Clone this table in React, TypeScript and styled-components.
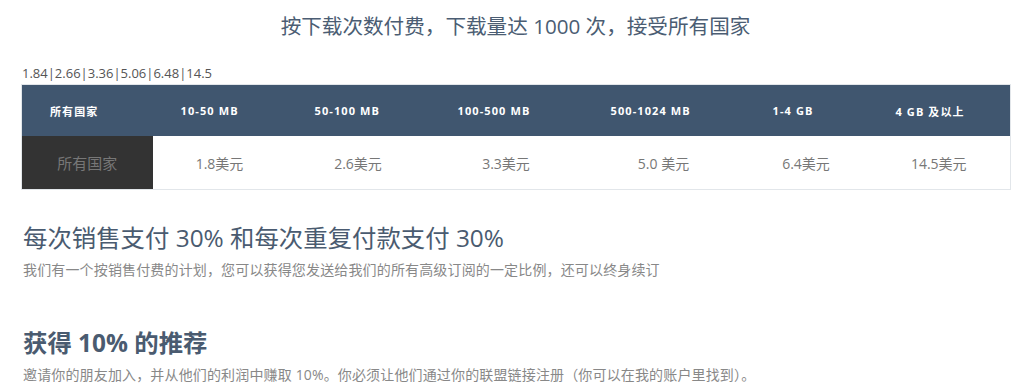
import React from 'react';
import styled, { createGlobalStyle } from 'styled-components';

const GlobalStyle = createGlobalStyle`
    html, body {
        margin: 0;
        padding: 0;
        background: #fff;
    }
    body {
        font-family: 'Open Sans', 'Noto Sans CJK SC', sans-serif;
    }
`;

const Page = styled.div`
    width: 989px;
    padding: 14px 0 0 21px;
    display: flex;
    flex-direction: column;
`;

const Title = styled.h1`
    margin: 0;
    font-size: 20.6px;
    line-height: 24px;
    font-weight: 400;
    color: #4b5d73;
    text-align: center;
`;

const PriceLine = styled.div`
    margin-top: 27px;
    font-size: 13px;
    line-height: 16px;
    color: #555;
    padding-left: 1px;
`;

const PriceTable = styled.table`
    margin-top: 3px;
    width: 989px;
    table-layout: fixed;
    border-collapse: collapse;
    border: 1px solid #e2e6ea;

    th {
        height: 51px;
        padding: 0 0 0 28px;
        background: #40566f;
        color: #fff;
        font-size: 11px;
        font-weight: 700;
        letter-spacing: 1.1px;
        text-align: left;
    }

    td {
        height: 53px;
        padding: 0;
        text-align: center;
        font-size: 14px;
        color: #777;
    }
`;

const CountryCell = styled.td`
    && {
        background: #333;
        color: #777;
        font-size: 15px;
    }
`;

const SectionTitle = styled.h2<{ $bold?: boolean; $gap: number }>`
    margin: ${(p) => p.$gap}px 0 0 2px;
    font-size: 24.4px;
    line-height: 30px;
    font-weight: ${(p) => (p.$bold ? 700 : 400)};
    color: #4a5b70;
`;

const SectionText = styled.p`
    margin: 7px 0 0 2px;
    font-size: 14px;
    line-height: 20px;
    letter-spacing: 0.15px;
    color: #888;
`;

const columns = [131, 134, 143, 153, 162, 123, 143];

const ranges = ['10-50 MB', '50-100 MB', '100-500 MB', '500-1024 MB', '1-4 GB', '4 GB 及以上'];
const prices = ['1.8美元', '2.6美元', '3.3美元', '5.0 美元', '6.4美元', '14.5美元'];

const App = () => {
    return (
        <>
            <GlobalStyle />
            <Page>
                <Title>按下载次数付费，下载量达 1000 次，接受所有国家</Title>
                <PriceLine>1.84|2.66|3.36|5.06|6.48|14.5</PriceLine>
                <PriceTable>
                    <colgroup>
                        {columns.map((w, i) => (
                            <col key={`col-${i}`} style={{ width: w }} />
                        ))}
                    </colgroup>
                    <thead>
                        <tr>
                            <th>所有国家</th>
                            {ranges.map((r) => (
                                <th key={r}>{r}</th>
                            ))}
                        </tr>
                    </thead>
                    <tbody>
                        <tr>
                            <CountryCell>所有国家</CountryCell>
                            {prices.map((p) => (
                                <td key={p}>{p}</td>
                            ))}
                        </tr>
                    </tbody>
                </PriceTable>
                <SectionTitle $gap={33}>每次销售支付 30% 和每次重复付款支付 30%</SectionTitle>
                <SectionText>我们有一个按销售付费的计划，您可以获得您发送给我们的所有高级订阅的一定比例，还可以终身续订</SectionText>
                <SectionTitle $gap={48} $bold>获得 10% 的推荐</SectionTitle>
                <SectionText>邀请你的朋友加入，并从他们的利润中赚取 10%。你必须让他们通过你的联盟链接注册（你可以在我的账户里找到）。</SectionText>
            </Page>
        </>
    );
};

export default App;
